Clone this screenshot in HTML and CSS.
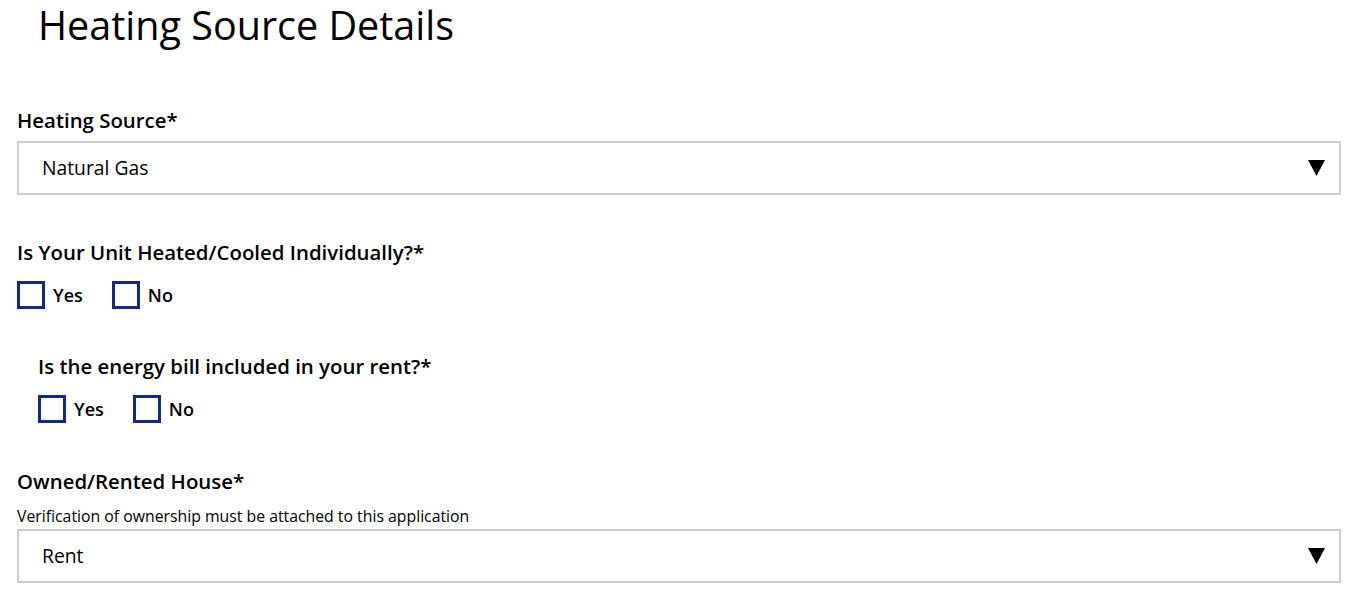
FILE: index.html
```html
<!DOCTYPE html>
<html lang="en">
<head>
<meta charset="utf-8">
<title>Heating Source Details</title>
<link rel="stylesheet" href="styles.css">
</head>
<body>
<main class="page">
  <h1 class="title">Heating Source Details</h1>

  <section class="field field-source">
    <div class="label">Heating Source*</div>
    <div class="select">
      <span class="select-value">Natural Gas</span>
      <svg class="select-arrow" width="17" height="16" viewBox="0 0 17 16"><polygon points="0,0 17,0 8.5,16" fill="#000"/></svg>
    </div>
  </section>

  <section class="field field-unit">
    <div class="label">Is Your Unit Heated/Cooled Individually?*</div>
    <div class="choices">
      <label class="choice"><span class="box"></span><span class="choice-text">Yes</span></label>
      <label class="choice"><span class="box"></span><span class="choice-text">No</span></label>
    </div>
  </section>

  <section class="field field-bill">
    <div class="label">Is the energy bill included in your rent?*</div>
    <div class="choices">
      <label class="choice"><span class="box"></span><span class="choice-text">Yes</span></label>
      <label class="choice"><span class="box"></span><span class="choice-text">No</span></label>
    </div>
  </section>

  <section class="field field-owned">
    <div class="label">Owned/Rented House*</div>
    <div class="note">Verification of ownership must be attached to this application</div>
    <div class="select">
      <span class="select-value">Rent</span>
      <svg class="select-arrow" width="17" height="16" viewBox="0 0 17 16"><polygon points="0,0 17,0 8.5,16" fill="#000"/></svg>
    </div>
  </section>
</main>
</body>
</html>
```

FILE: styles.css
```css
html, body {
  margin: 0;
  padding: 0;
  background: #fff;
}

body {
  font-family: "Open Sans", "Noto Sans", "Liberation Sans", sans-serif;
  color: #000;
}

.page {
  padding: 0 15px 0 17px;
}

.title {
  margin: 0;
  padding-left: 21px;
  font-size: 39.5px;
  font-weight: 400;
  line-height: 50px;
}

.label {
  font-size: 20.4px;
  font-weight: 600;
  line-height: 28px;
}

.field-source {
  margin-top: 56px;
}

.field-source .label {
  margin-bottom: 7px;
}

.select {
  box-sizing: border-box;
  height: 54px;
  border: 2px solid #cccccc;
  display: flex;
  align-items: center;
  justify-content: space-between;
  padding: 0 14px 0 23px;
}

.select-value {
  font-size: 19.3px;
  line-height: 24px;
}

.select-arrow {
  display: block;
}

.field-unit {
  margin-top: 43px;
}

.field-bill {
  margin-top: 43px;
  padding-left: 21px;
}

.choices {
  display: flex;
  gap: 29px;
  margin-top: 15px;
}

.choice {
  display: flex;
  align-items: center;
  gap: 8px;
}

.box {
  box-sizing: border-box;
  width: 28px;
  height: 28px;
  border: 3px solid #16278a;
  display: block;
}

.choice-text {
  font-size: 18px;
  font-weight: 600;
  line-height: 24px;
}

.field-owned {
  margin-top: 44px;
}

.note {
  font-size: 15.8px;
  line-height: 22px;
  margin-top: 10px;
  margin-bottom: 2px;
}
```
